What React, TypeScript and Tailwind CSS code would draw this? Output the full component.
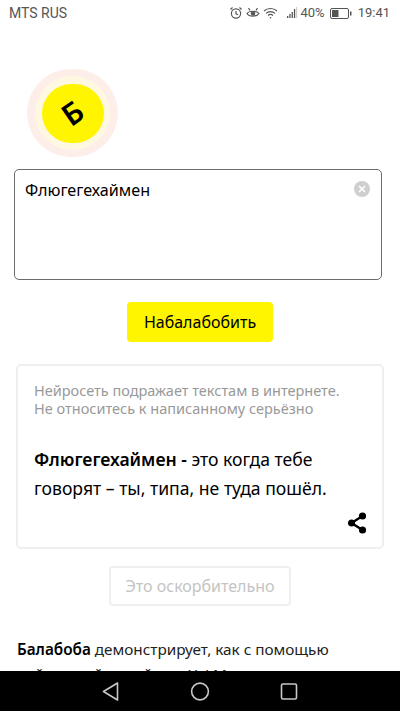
export default function App() {
  return (
    <div className="w-[400px] h-[711px] flex flex-col overflow-hidden bg-white text-black font-['Noto_Sans',sans-serif]">
      <div className="flex-1 min-h-0 overflow-hidden">
        <div className="h-[26px] flex items-center pl-[9px] pr-[10px] text-[13px] text-[#555] font-['Roboto',sans-serif]">
          <span className="text-[14px]">MTS RUS</span>
          <div className="ml-auto flex items-center">
            <svg width="14" height="14" viewBox="0 0 14 14" fill="none" stroke="#555" strokeWidth="1.2" className="mr-[3px]">
              <circle cx="7" cy="7.5" r="4.6" /><path d="M7 5v2.8l2 1M1.5 3.5 3.5 1.5M12.5 3.5l-2-2" />
            </svg>
            <svg width="14" height="14" viewBox="0 0 14 14" fill="none" stroke="#555" strokeWidth="1.2" className="mr-[3px]">
              <path d="M1 7.5C3 4.5 11 4.5 13 7.5 11 11 3 11 1 7.5Z" /><circle cx="7" cy="7.5" r="1.6" fill="#555" /><path d="M2.5 2 4 4.5M11.5 2 10 4.5" />
            </svg>
            <svg width="15" height="14" viewBox="0 0 15 14" fill="none" stroke="#555" strokeWidth="1.1" className="mr-[9px]">
              <path d="M1 5c3.6-3.4 9.4-3.4 13 0M3 7.3c2.5-2.3 6.5-2.3 9 0M5 9.5c1.4-1.2 3.6-1.2 5 0" /><circle cx="7.5" cy="11.8" r=".8" fill="#555" stroke="none" />
            </svg>
            <svg width="11" height="12" viewBox="0 0 11 12" fill="#555" className="mr-[2px]">
              <rect x="0" y="9" width="1.3" height="2" /><rect x="2.3" y="7" width="1.3" height="4" /><rect x="4.6" y="5" width="1.3" height="6" /><rect x="6.9" y="2" width="1.3" height="9" /><rect x="9.4" y="0" width=".7" height="11" fill="#aaa" />
            </svg>
            <span className="mr-[5px]">40%</span>
            <svg width="22" height="11" viewBox="0 0 22 11" fill="none" className="mr-[6px]">
              <rect x=".5" y=".5" width="18" height="10" rx="1.5" stroke="#555" /><rect x="2" y="2" width="6.5" height="7" fill="#555" /><rect x="20" y="3.5" width="1.5" height="4" fill="#555" />
            </svg>
            <span>19:41</span>
          </div>
        </div>

        <div className="mt-[43px] ml-[27px] w-[91px] h-[88px] rounded-full bg-[#fdeeea] flex items-center justify-center">
          <div className="w-[75px] h-[74px] rounded-full bg-[#fef8e0] flex items-center justify-center">
            <div className="w-[62px] h-[59px] rounded-full bg-[#fff500] flex items-center justify-center">
              <span className="text-[30px] font-semibold leading-none -rotate-[35deg]">Б</span>
            </div>
          </div>
        </div>

        <div className="relative mt-[12px] ml-[14px] w-[368px] h-[111px] rounded-[5px] border border-[#6b6b6b] pl-[10px] pt-[9px] text-[16.2px] leading-[22px]">
          Флюгегехаймен
          <div className="absolute top-[11px] right-[11px] w-4 h-4 rounded-full bg-[#cfcfcf] flex items-center justify-center">
            <svg width="8" height="8" viewBox="0 0 8 8" stroke="#fff" strokeWidth="1.7"><path d="M1 1l6 6M7 1 1 7" /></svg>
          </div>
        </div>

        <div className="mt-[22px] mx-auto w-[146px] h-[40px] rounded-[4px] bg-[#fff500] flex items-center justify-center text-[16px]">
          Набалабобить
        </div>

        <div className="relative mt-[22px] ml-[16px] w-[368px] h-[185px] rounded-[5px] border-2 border-[#efefef] pl-[16px] pt-[15px]">
          <p className="text-[14.5px] leading-[18px] text-[#999]">Нейросеть подражает текстам в интернете.<br />Не относитесь к написанному серьёзно</p>
          <p className="mt-[28px] text-[17.6px] leading-[29px]"><b className="font-semibold text-[17.6px]">Флюгегехаймен -</b> это когда тебе<br />говорят – ты, типа, не туда пошёл.</p>
          <svg width="20" height="22" viewBox="0 0 20 22" className="absolute right-[15px] bottom-[13px]" fill="#000" stroke="#000" strokeWidth="2.4">
            <path d="M15.5 4 4.5 11l11 7" fill="none" /><circle cx="15.5" cy="4" r="2.4" /><circle cx="4.5" cy="11" r="2.4" /><circle cx="15.5" cy="18" r="2.4" />
          </svg>
        </div>

        <div className="mt-[17px] mx-auto w-[182px] h-[40px] rounded-[4px] border-2 border-[#efefef] flex items-center justify-center text-[16px] text-[#c4c4c4]">
          Это оскорбительно
        </div>

        <p className="mt-[31px] mx-[17px] whitespace-nowrap text-[15.3px] leading-[25px] text-[#222]"><b className="font-semibold text-black text-[15.3px]">Балабоба</b> демонстрирует, как с помощью<br />нейросетей семейства YaLM можно продолжать</p>
      </div>

      <div className="h-10 shrink-0 bg-black flex items-center justify-center">
        <svg width="300" height="40" viewBox="0 0 300 40" fill="none" stroke="#c8c8c8" strokeWidth="1.6">
          <path d="M67.5 12 L53.5 20.5 67.5 29Z" strokeLinejoin="round" />
          <circle cx="150" cy="20.5" r="8.4" />
          <rect x="231.5" y="13" width="15" height="15" rx="1.5" />
        </svg>
      </div>
    </div>
  );
}
